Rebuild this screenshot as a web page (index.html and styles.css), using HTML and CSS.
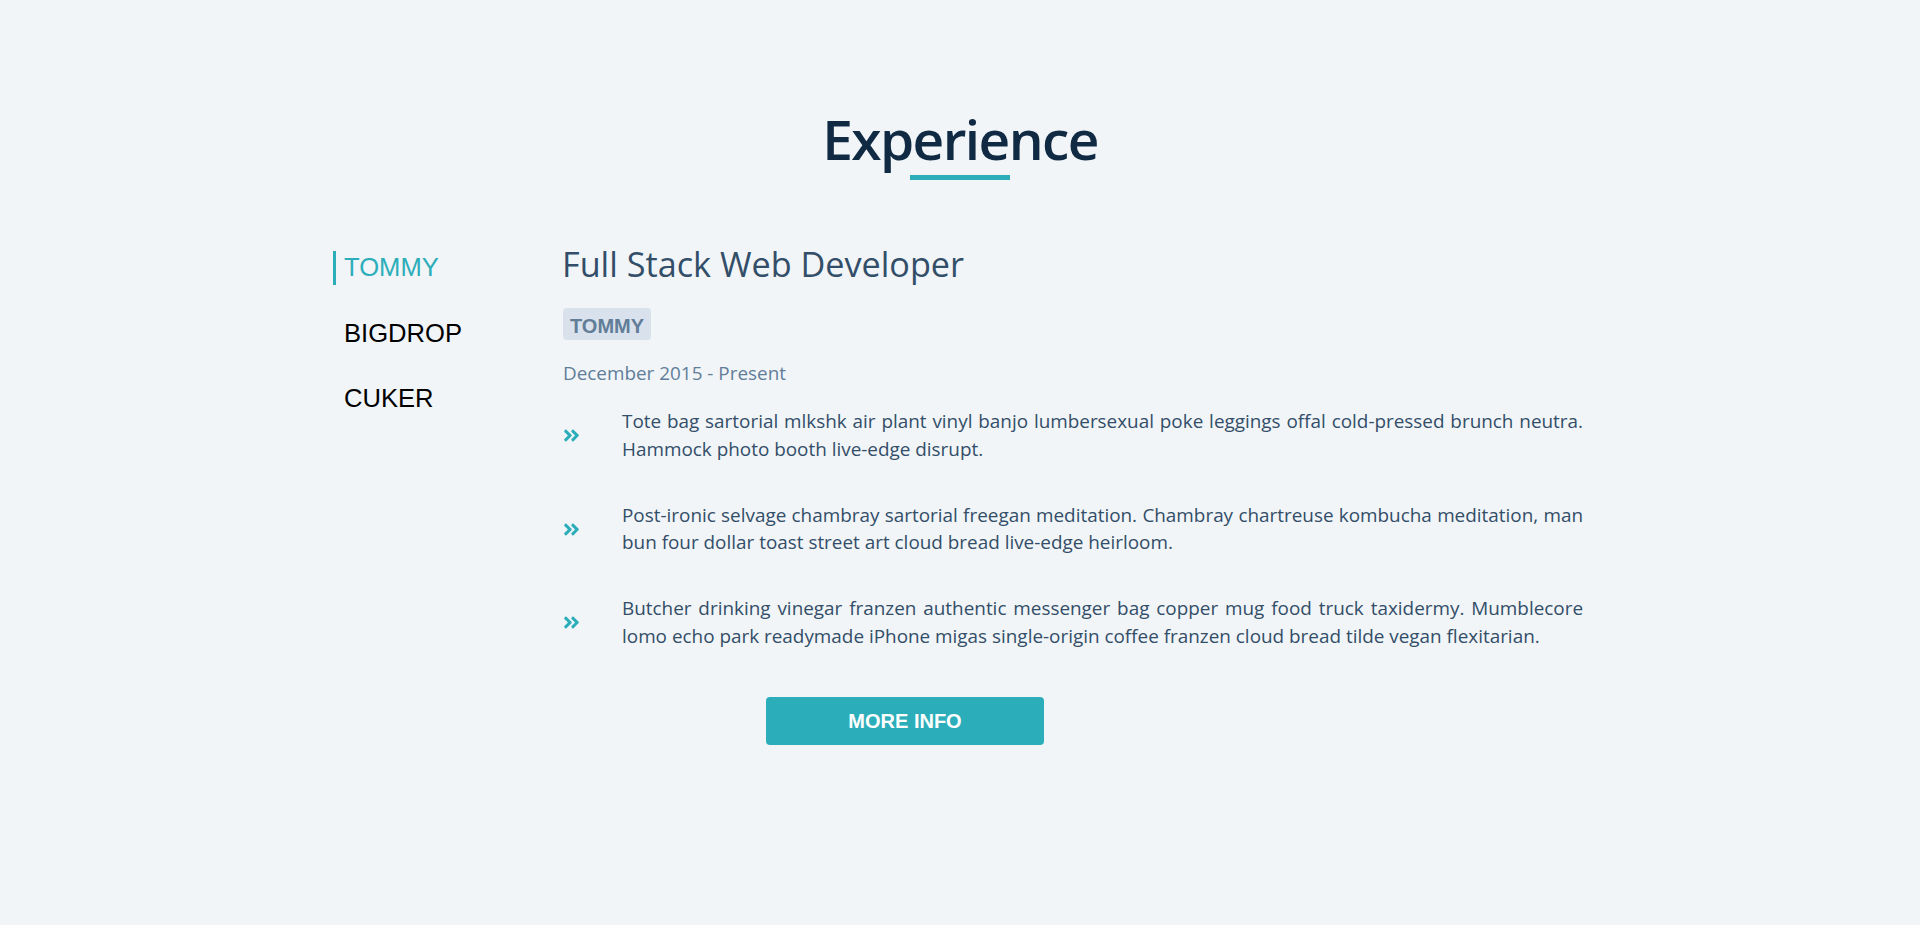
FILE: index.html
```html
<!DOCTYPE html>
<html lang="en">
<head>
<meta charset="utf-8">
<title>Experience</title>
<link rel="stylesheet" href="styles.css">
</head>
<body>
<section class="section">
  <div class="title">
    <h2>Experience</h2>
    <div class="underline"></div>
  </div>
  <div class="jobs-center">
    <div class="btn-container">
      <button class="job-btn active-btn">TOMMY</button>
      <button class="job-btn">BIGDROP</button>
      <button class="job-btn">CUKER</button>
    </div>
    <article class="job-info">
      <h3>Full Stack Web Developer</h3>
      <h4>TOMMY</h4>
      <p class="job-date">December 2015 - Present</p>
      <div class="job-desc">
        <svg class="job-icon" viewBox="0 0 448 512" aria-hidden="true"><path d="M224.3 273l-136 136c-9.4 9.4-24.6 9.4-33.9 0l-22.6-22.6c-9.4-9.4-9.4-24.6 0-33.9l96.4-96.4-96.4-96.4c-9.4-9.4-9.4-24.6 0-33.9L54.3 103c9.4-9.4 24.6-9.4 33.9 0l136 136c9.5 9.4 9.5 24.6.1 34zm192-34l-136-136c-9.4-9.4-24.6-9.4-33.9 0l-22.6 22.6c-9.4 9.4-9.4 24.6 0 33.9l96.4 96.4-96.4 96.4c-9.4 9.4-9.4 24.6 0 33.9l22.6 22.6c9.4 9.4 24.6 9.4 33.9 0l136-136c9.4-9.2 9.4-24.4 0-33.8z"/></svg>
        <p>Tote bag sartorial mlkshk air plant vinyl banjo lumbersexual poke leggings offal cold-pressed brunch neutra. Hammock photo booth live-edge disrupt.</p>
      </div>
      <div class="job-desc">
        <svg class="job-icon" viewBox="0 0 448 512" aria-hidden="true"><path d="M224.3 273l-136 136c-9.4 9.4-24.6 9.4-33.9 0l-22.6-22.6c-9.4-9.4-9.4-24.6 0-33.9l96.4-96.4-96.4-96.4c-9.4-9.4-9.4-24.6 0-33.9L54.3 103c9.4-9.4 24.6-9.4 33.9 0l136 136c9.5 9.4 9.5 24.6.1 34zm192-34l-136-136c-9.4-9.4-24.6-9.4-33.9 0l-22.6 22.6c-9.4 9.4-9.4 24.6 0 33.9l96.4 96.4-96.4 96.4c-9.4 9.4-9.4 24.6 0 33.9l22.6 22.6c9.4 9.4 24.6 9.4 33.9 0l136-136c9.4-9.2 9.4-24.4 0-33.8z"/></svg>
        <p>Post-ironic selvage chambray sartorial freegan meditation. Chambray chartreuse kombucha meditation, man bun four dollar toast street art cloud bread live-edge heirloom.</p>
      </div>
      <div class="job-desc">
        <svg class="job-icon" viewBox="0 0 448 512" aria-hidden="true"><path d="M224.3 273l-136 136c-9.4 9.4-24.6 9.4-33.9 0l-22.6-22.6c-9.4-9.4-9.4-24.6 0-33.9l96.4-96.4-96.4-96.4c-9.4-9.4-9.4-24.6 0-33.9L54.3 103c9.4-9.4 24.6-9.4 33.9 0l136 136c9.5 9.4 9.5 24.6.1 34zm192-34l-136-136c-9.4-9.4-24.6-9.4-33.9 0l-22.6 22.6c-9.4 9.4-9.4 24.6 0 33.9l96.4 96.4-96.4 96.4c-9.4 9.4-9.4 24.6 0 33.9l22.6 22.6c9.4 9.4 24.6 9.4 33.9 0l136-136c9.4-9.2 9.4-24.4 0-33.8z"/></svg>
        <p>Butcher drinking vinegar franzen authentic messenger bag copper mug food truck taxidermy. Mumblecore lomo echo park readymade iPhone migas single-origin coffee franzen cloud bread tilde vegan flexitarian.</p>
      </div>
      <button class="btn">MORE INFO</button>
    </article>
  </div>
</section>
</body>
</html>
```

FILE: styles.css
```css
* { box-sizing: border-box; }

html, body {
  margin: 0;
  padding: 0;
}

body {
  background: #f1f5f8;
  font-family: "Open Sans", "Noto Sans", sans-serif;
  color: #334e68;
  min-height: 925px;
}

.section {
  padding-top: 110px;
}

.title {
  text-align: center;
}

.title h2 {
  margin: 0;
  font-size: 55px;
  line-height: 58px;
  font-weight: 600;
  color: #102a43;
  letter-spacing: -1.6px;
}

.underline {
  width: 100px;
  height: 5px;
  margin: 7px auto 0;
  background: #2caeba;
}

.jobs-center {
  width: 1254px;
  padding-right: 4px;
  margin: 62px auto 0;
  display: grid;
  grid-template-columns: 166px 1fr;
  column-gap: 64px;
  align-items: start;
}

.btn-container {
  display: flex;
  flex-direction: column;
  align-items: flex-start;
  gap: 32px;
  margin-top: 9px;
}

.job-btn {
  background: transparent;
  border: 0;
  border-left: 3px solid transparent;
  padding: 4px 0 4px 8px;
  margin: 0;
  font-family: "Liberation Sans", Arial, sans-serif;
  font-size: 25.6px;
  line-height: 1;
  color: #000;
  text-align: left;
}

.job-btn.active-btn {
  color: #2caeba;
  border-left-color: #2caeba;
}

.job-info h3 {
  margin: 0 0 0 -1px;
  font-size: 34.2px;
  line-height: 43px;
  font-weight: 400;
  color: #334e68;
}

.job-info h4 {
  display: inline-block;
  margin: 23px 0 0;
  padding: 8px 7px 4px;
  font-family: "Liberation Sans", Arial, sans-serif;
  font-size: 20px;
  line-height: 20px;
  font-weight: 700;
  color: #617d98;
  background: #d9e2ec;
  border-radius: 4px;
}

.job-date {
  margin: 20px 0 0;
  font-size: 18.9px;
  line-height: 27px;
  color: #617d98;
}

.job-desc {
  display: grid;
  grid-template-columns: 17px 1fr;
  column-gap: 42px;
  align-items: center;
  margin-top: 21px;
}

.job-desc + .job-desc {
  margin-top: 38.5px;
}

.job-icon {
  width: 17px;
  height: 19px;
  fill: #2caeba;
  display: block;
}

.job-desc p {
  margin: 0;
  font-size: 18.9px;
  line-height: 27.5px;
  text-align: justify;
  color: #334e68;
}

.btn {
  display: block;
  width: 278px;
  height: 48px;
  margin: 47px 0 0 203px;
  padding: 0;
  border: 0;
  border-radius: 4px;
  background: #2caeba;
  color: #fff;
  font-family: "Liberation Sans", Arial, sans-serif;
  font-size: 20px;
  font-weight: 700;
  line-height: 48px;
  text-align: center;
}
```
